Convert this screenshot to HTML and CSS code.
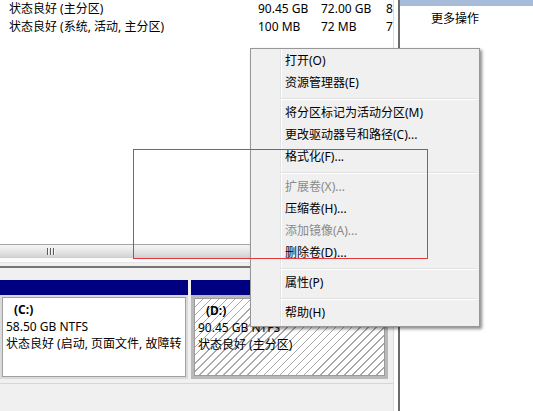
FILE: index.html
```html
<!DOCTYPE html>
<html>

<head>
  <meta charset="utf-8">
  <link rel="stylesheet" href="styles.css">
</head>

<body>

  <div class="app">
    <div class="main">
      <div class="pane">

        <div class="list">
          <div class="row">
            <span>状态良好 (主分区)</span>
            <span>90.45 GB</span>
            <span>72.00 GB</span>
            <span>8</span>
          </div>
          <div class="row">
            <span>状态良好 (系统, 活动, 主分区)</span>
            <span>100 MB</span>
            <span>72 MB</span>
            <span>7</span>
          </div>
        </div>

        <div class="hscroll">
          <span class="grip"></span>
        </div>
        <div class="hgap"></div>
        <div class="split"></div>

        <div class="disks">
          <div class="part part-c">
            <div class="bar"></div>
            <div class="body">
              <div class="box">
                <div class="label">(C:)</div>
                <div>58.50 GB NTFS</div>
                <div>状态良好 (启动, 页面文件, 故障转</div>
              </div>
            </div>
          </div>
          <div class="part part-d">
            <div class="bar"></div>
            <div class="body">
              <div class="box">
                <div class="label">(D:)</div>
                <div>90.45 GB NTFS</div>
                <div>状态良好 (主分区)</div>
              </div>
            </div>
          </div>
        </div>

      </div>
    </div>

    <div class="side">
      <div class="side-head"></div>
      <div class="side-item">更多操作</div>
    </div>
  </div>

  <div class="menu">
    <div class="item">打开(O)</div>
    <div class="item">资源管理器(E)</div>
    <div class="sep"></div>
    <div class="item">将分区标记为活动分区(M)</div>
    <div class="item">更改驱动器号和路径(C)...</div>
    <div class="item">格式化(F)...</div>
    <div class="sep"></div>
    <div class="item off">扩展卷(X)...</div>
    <div class="item">压缩卷(H)...</div>
    <div class="item off">添加镜像(A)...</div>
    <div class="item">删除卷(D)...</div>
    <div class="sep"></div>
    <div class="item">属性(P)</div>
    <div class="sep"></div>
    <div class="item">帮助(H)</div>
  </div>

  <div class="mark"></div>

</body>

</html>
```

FILE: styles.css
```css
html,
body {
  margin: 0;
  padding: 0;
}

body {
  position: relative;
  width: 533px;
  height: 411px;
  overflow: hidden;
  background: #fff;
  color: #000;
  font-family: "Noto Sans", "Noto Sans CJK SC", sans-serif;
  font-size: 12px;
}

.app {
  display: flex;
  height: 411px;
}

.main {
  width: 398px;
  border-right: 2px solid #6b6b6b;
  background: #fff;
}

.pane {
  display: flex;
  flex-direction: column;
  width: 393px;
  height: 411px;
  border-right: 1px solid #dcdcdc;
  background: #f0f0f0;
}

/* volume list */
.list {
  height: 244px;
  background: #fff;
  overflow: hidden;
}

.row {
  display: grid;
  grid-template-columns: 249px 63px 65px auto;
  padding-left: 9px;
  height: 18px;
  line-height: 18px;
  white-space: nowrap;
}

.hscroll {
  height: 13px;
  border-top: 1px solid #a7a7a7;
  background: linear-gradient(#f4f4f4, #ebebeb 35%, #d9d9d9 80%, #cdcdcd);
}

.grip {
  display: block;
  width: 8px;
  height: 7px;
  margin: 3px 0 0 47px;
  background: repeating-linear-gradient(to right, #5a5a5a 0 1px, #f6f6f6 1px 2px, transparent 2px 3px);
}

.hgap {
  height: 8px;
  background: linear-gradient(#fbfbfb 0 4px, #e6e6e6 4px 5px, #f0f0f0 5px);
}

.split {
  height: 2px;
  margin-bottom: 12px;
  background: #747474;
}

/* graphical disk view */
.disks {
  display: flex;
  gap: 3px;
  padding-bottom: 4px;
  border-bottom: 1px solid #d6d6d6;
}

.part {
  display: flex;
  flex-direction: column;
}

.part-c {
  width: 188px;
}

.part-d {
  width: 197px;
}

.bar {
  height: 15px;
  background: #000080;
}

.body {
  height: 84px;
  box-sizing: border-box;
}

.part-c .body {
  padding: 2px;
  background: #dadada;
}

.part-d .body {
  padding: 3px;
  background: #b9b9b9;
}

.box {
  height: 100%;
  box-sizing: border-box;
  padding: 3px 0 0 3px;
  border: 1px solid #a0a0a0;
  background: #fff;
  line-height: 17px;
  white-space: nowrap;
  overflow: hidden;
}

.part-d .box {
  border-color: #9c9c9c;
  background: repeating-linear-gradient(-45deg, #fff 0 4.6px, #a9a9a9 4.6px 5.7px);
}

.label {
  padding-left: 8px;
  font-weight: bold;
}

/* actions pane */
.side {
  flex: 1;
  background: #fff;
}

.side-head {
  height: 6px;
  background: #a7bcd8;
}

.side-item {
  margin-top: 4px;
  padding-left: 31px;
  line-height: 18px;
}

/* context menu */
.menu {
  position: absolute;
  left: 250px;
  top: 48px;
  width: 230px;
  box-sizing: border-box;
  padding: 1px 0 2px;
  border: 1px solid #979797;
  background: #f0f0f0 linear-gradient(to right, transparent 29px, #e2e3e3 29px 30px, #fff 30px 31px, transparent 31px);
  box-shadow: 2px 2px 3px rgba(0, 0, 0, .45);
}

.item {
  height: 22px;
  padding-left: 34px;
  line-height: 22px;
  white-space: nowrap;
}

.item.off {
  color: #8a8a8a;
}

.sep {
  height: 1px;
  margin: 4px 2px 2px 29px;
  border-top: 1px solid #e0e0e0;
  background: #fff;
}

/* red selection frame */
.mark {
  position: absolute;
  left: 133px;
  top: 149px;
  width: 295px;
  height: 110px;
  box-sizing: border-box;
  border: 1px solid #e23a3c;
}
```
